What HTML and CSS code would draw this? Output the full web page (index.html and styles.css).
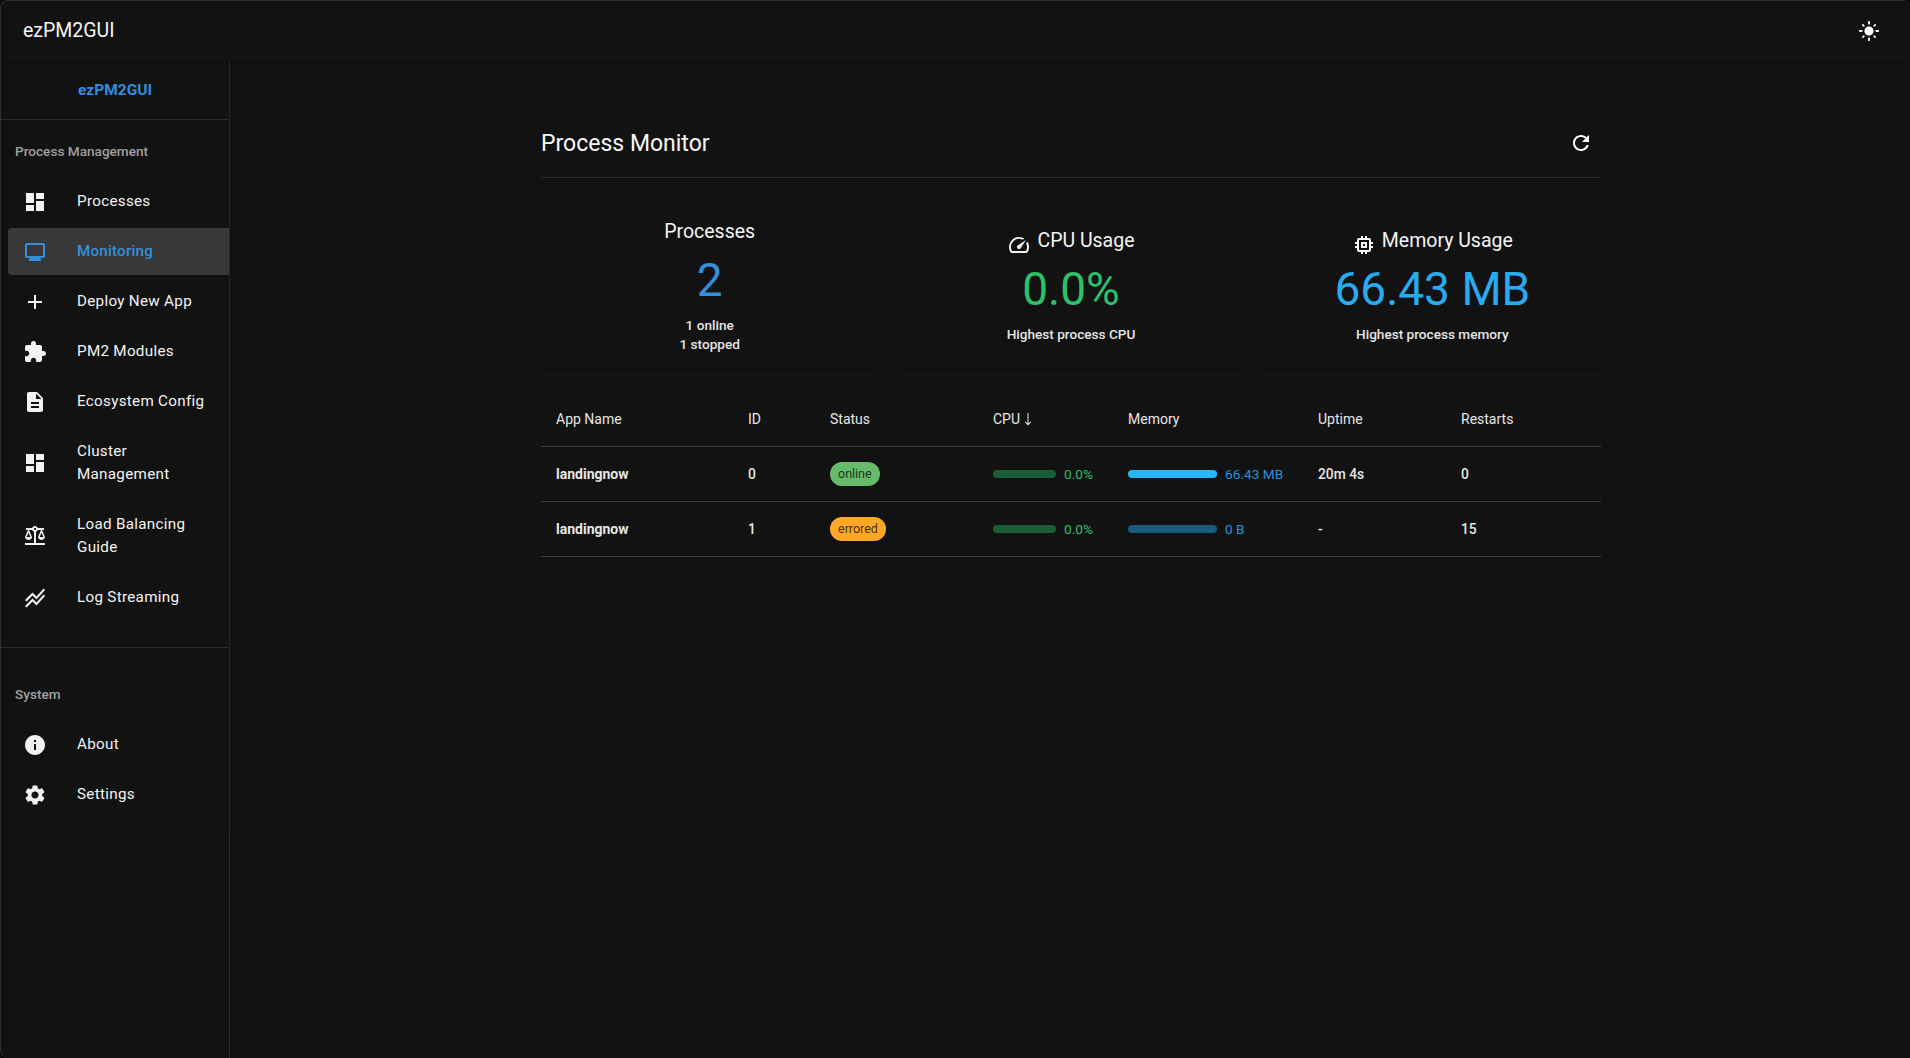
FILE: index.html
```html
<!DOCTYPE html>
<html lang="en">
<head>
<meta charset="utf-8">
<title>ezPM2GUI</title>
<link rel="stylesheet" href="styles.css">
</head>
<body>
<div class="window">
  <header class="appbar">
    <div class="brand">ezPM2GUI</div>
    <button class="theme-btn" aria-label="Toggle theme">
      <svg class="icon" viewBox="0 0 24 24"><path d="M12 7c-2.76 0-5 2.24-5 5s2.24 5 5 5 5-2.24 5-5-2.24-5-5-5zM2 13h2c.55 0 1-.45 1-1s-.45-1-1-1H2c-.55 0-1 .45-1 1s.45 1 1 1zm18 0h2c.55 0 1-.45 1-1s-.45-1-1-1h-2c-.55 0-1 .45-1 1s.45 1 1 1zM11 2v2c0 .55.45 1 1 1s1-.45 1-1V2c0-.55-.45-1-1-1s-1 .45-1 1zm0 18v2c0 .55.45 1 1 1s1-.45 1-1v-2c0-.55-.45-1-1-1s-1 .45-1 1zM5.99 4.58c-.39-.39-1.03-.39-1.41 0-.39.39-.39 1.03 0 1.41l1.06 1.06c.39.39 1.03.39 1.41 0s.39-1.03 0-1.41L5.99 4.58zm12.37 12.37c-.39-.39-1.03-.39-1.41 0-.39.39-.39 1.03 0 1.41l1.06 1.06c.39.39 1.03.39 1.41 0 .39-.39.39-1.03 0-1.41l-1.06-1.06zm1.06-10.96c.39-.39.39-1.03 0-1.41-.39-.39-1.03-.39-1.41 0l-1.06 1.06c-.39.39-.39 1.03 0 1.41s1.03.39 1.41 0l1.06-1.06zM7.05 18.36c.39-.39.39-1.03 0-1.41-.39-.39-1.03-.39-1.41 0l-1.06 1.06c-.39.39-.39 1.03 0 1.41s1.03.39 1.41 0l1.06-1.06z"/></svg>
    </button>
  </header>
  <div class="body-row">
    <aside class="sidebar">
      <div class="side-inner">
        <div class="side-brand">ezPM2GUI</div>
        <section class="side-group first">
          <div class="side-label">Process Management</div>
          <a class="nav-item"><svg class="icon nav-icon" viewBox="0 0 24 24"><path d="M3 13h8V3H3v10zm0 8h8v-6H3v6zm10 0h8V11h-8v10zm0-18v6h8V3h-8z"/></svg><span>Processes</span></a>
          <a class="nav-item active"><svg class="icon nav-icon" viewBox="0 0 24 24"><path d="M20 3H4c-1.1 0-2 .9-2 2v11c0 1.1.9 2 2 2h3l-1 1v2h12v-2l-1-1h3c1.1 0 2-.9 2-2V5c0-1.1-.9-2-2-2zm0 13H4V5h16v11z"/></svg><span>Monitoring</span></a>
          <a class="nav-item"><svg class="icon nav-icon" viewBox="0 0 24 24"><path d="M19 13h-6v6h-2v-6H5v-2h6V5h2v6h6v2z"/></svg><span>Deploy New App</span></a>
          <a class="nav-item"><svg class="icon nav-icon" viewBox="0 0 24 24"><path d="M20.5 11H19V7c0-1.1-.9-2-2-2h-4V3.5C13 2.12 11.88 1 10.5 1S8 2.12 8 3.5V5H4c-1.1 0-1.99.9-1.99 2v3.8H3.5c1.49 0 2.7 1.21 2.7 2.7s-1.21 2.7-2.7 2.7H2V20c0 1.1.9 2 2 2h3.8v-1.5c0-1.49 1.21-2.7 2.7-2.7 1.49 0 2.7 1.21 2.7 2.7V22H17c1.1 0 2-.9 2-2v-4h1.5c1.38 0 2.5-1.12 2.5-2.5S21.88 11 20.5 11z"/></svg><span>PM2 Modules</span></a>
          <a class="nav-item"><svg class="icon nav-icon" viewBox="0 0 24 24"><path d="M14 2H6c-1.1 0-1.99.9-1.99 2L4 20c0 1.1.89 2 1.99 2H18c1.1 0 2-.9 2-2V8l-6-6zm2 16H8v-2h8v2zm0-4H8v-2h8v2zm-3-5V3.5L18.5 9H13z"/></svg><span>Ecosystem Config</span></a>
          <a class="nav-item"><svg class="icon nav-icon" viewBox="0 0 24 24"><path d="M3 13h8V3H3v10zm0 8h8v-6H3v6zm10 0h8V11h-8v10zm0-18v6h8V3h-8z"/></svg><span>Cluster Management</span></a>
          <a class="nav-item"><svg class="icon nav-icon" viewBox="0 0 24 24"><path d="M13 7.83c.85-.3 1.53-.98 1.83-1.83H18l-3 7c0 1.66 1.57 3 3.5 3s3.5-1.34 3.5-3l-3-7h2V4h-6.17c-.41-1.17-1.52-2-2.83-2s-2.42.83-2.83 2H3v2h2l-3 7c0 1.66 1.57 3 3.5 3S9 14.66 9 13L6 6h3.17c.3.85.98 1.53 1.83 1.83V19H2v2h20v-2h-9V7.83zM20.37 13h-3.74l1.87-4.36L20.37 13zm-13 0H3.63L5.5 8.64 7.37 13zM12 6c-.55 0-1-.45-1-1s.45-1 1-1 1 .45 1 1-.45 1-1 1z"/></svg><span>Load Balancing Guide</span></a>
          <a class="nav-item"><svg class="icon nav-icon" viewBox="0 0 24 24"><path d="M2 19.99l7.5-7.51 4 4 7.09-7.97L22 9.92l-8.5 9.56-4-4-6 6.01-1.5-1.5zm1.5-4.5l6-6.01 4 4L22 3.92l-1.41-1.41-7.09 7.97-4-4L2 13.99l1.5 1.5z"/></svg><span>Log Streaming</span></a>
        </section>
        <section class="side-group second">
          <div class="side-label">System</div>
          <a class="nav-item"><svg class="icon nav-icon" viewBox="0 0 24 24"><path d="M12 2C6.48 2 2 6.48 2 12s4.48 10 10 10 10-4.48 10-10S17.52 2 12 2zm1 15h-2v-6h2v6zm0-8h-2V7h2v2z"/></svg><span>About</span></a>
          <a class="nav-item"><svg class="icon nav-icon" viewBox="0 0 24 24"><path d="M19.14 12.94c.04-.3.06-.61.06-.94 0-.32-.02-.64-.07-.94l2.03-1.58c.18-.14.23-.41.12-.61l-1.92-3.32c-.12-.22-.37-.29-.59-.22l-2.39.96c-.5-.38-1.03-.7-1.62-.94l-.36-2.54c-.04-.24-.24-.41-.48-.41h-3.84c-.24 0-.43.17-.47.41l-.36 2.54c-.59.24-1.13.57-1.62.94l-2.39-.96c-.22-.08-.47 0-.59.22L2.74 8.87c-.12.21-.08.47.12.61l2.03 1.58c-.05.3-.09.63-.09.94s.02.64.07.94l-2.03 1.58c-.18.14-.23.41-.12.61l1.92 3.32c.12.22.37.29.59.22l2.39-.96c.5.38 1.03.7 1.62.94l.36 2.54c.05.24.24.41.48.41h3.84c.24 0 .44-.17.47-.41l.36-2.54c.59-.24 1.13-.56 1.62-.94l2.39.96c.22.08.47 0 .59-.22l1.92-3.32c.12-.22.07-.47-.12-.61l-2.01-1.58zM12 15.6c-1.98 0-3.6-1.62-3.6-3.6s1.62-3.6 3.6-3.6 3.6 1.62 3.6 3.6-1.62 3.6-3.6 3.6z"/></svg><span>Settings</span></a>
        </section>
      </div>
    </aside>
    <main class="main">
      <div class="panel">
        <div class="panel-head">
          <h1 class="panel-title">Process Monitor</h1>
          <button class="refresh" aria-label="Refresh">
            <svg class="icon" viewBox="0 0 24 24"><path d="M17.65 6.35C16.2 4.9 14.21 4 12 4c-4.42 0-7.99 3.58-7.99 8s3.57 8 7.99 8c3.73 0 6.84-2.55 7.73-6h-2.08c-.82 2.33-3.04 4-5.65 4-3.31 0-6-2.69-6-6s2.69-6 6-6c1.66 0 3.14.69 4.22 1.78L13 11h7V4l-2.35 2.35z"/></svg>
          </button>
        </div>
        <div class="cards">
          <div class="card">
            <div class="card-title">Processes</div>
            <div class="card-value blue">2</div>
            <div class="card-note">1 online</div>
            <div class="card-note">1 stopped</div>
          </div>
          <div class="card">
            <div class="card-title"><svg class="icon title-icon" viewBox="0 0 24 24"><path d="M20.38 8.57l-1.23 1.85a8 8 0 0 1-.22 7.58H5.07A8 8 0 0 1 15.58 6.85l1.85-1.23A10 10 0 0 0 3.35 19a2 2 0 0 0 1.72 1h13.85a2 2 0 0 0 1.74-1 10 10 0 0 0-.27-10.44zm-9.79 6.84a2 2 0 0 0 2.83 0l5.66-8.49-8.49 5.66a2 2 0 0 0 0 2.83z"/></svg>CPU Usage</div>
            <div class="card-value green">0.0%</div>
            <div class="card-note">Highest process CPU</div>
          </div>
          <div class="card">
            <div class="card-title"><svg class="icon title-icon" viewBox="0 0 24 24"><path d="M15 9H9v6h6V9zm-2 4h-2v-2h2v2zm8-2V9h-2V7c0-1.1-.9-2-2-2h-2V3h-2v2h-2V3H9v2H7c-1.1 0-2 .9-2 2v2H3v2h2v2H3v2h2v2c0 1.1.9 2 2 2h2v2h2v-2h2v2h2v-2h2c1.1 0 2-.9 2-2v-2h2v-2h-2v-2h2zm-4 6H7V7h10v10z"/></svg>Memory Usage</div>
            <div class="card-value sky">66.43 MB</div>
            <div class="card-note">Highest process memory</div>
          </div>
        </div>
        <table class="proc-table">
          <thead>
            <tr>
              <th>App Name</th><th>ID</th><th>Status</th>
              <th>CPU<svg class="sort-icon" viewBox="0 0 8 14"><path d="M3.5 0h1v10.2L6.6 8.4l.6.7L4 12.6.8 9.1l.6-.7 2.1 1.8z"/></svg></th>
              <th>Memory</th><th>Uptime</th><th>Restarts</th>
            </tr>
          </thead>
          <tbody>
            <tr>
              <td class="name">landingnow</td><td>0</td>
              <td><span class="chip chip-online">online</span></td>
              <td><div class="meter"><span class="bar bar-cpu"></span><span class="green">0.0%</span></div></td>
              <td><div class="meter"><span class="bar bar-mem"></span><span class="mem-text">66.43 MB</span></div></td>
              <td>20m 4s</td><td>0</td>
            </tr>
            <tr>
              <td class="name">landingnow</td><td>1</td>
              <td><span class="chip chip-errored">errored</span></td>
              <td><div class="meter"><span class="bar bar-cpu"></span><span class="green">0.0%</span></div></td>
              <td><div class="meter"><span class="bar bar-mem-empty"></span><span class="mem-text">0 B</span></div></td>
              <td>-</td><td>15</td>
            </tr>
          </tbody>
        </table>
      </div>
    </main>
  </div>
</div>
</body>
</html>
```

FILE: styles.css
```css
* { box-sizing: border-box; }
html, body { margin: 0; height: 100%; background: #0a0a0a; }
body { font-family: Roboto, "Liberation Sans", sans-serif; color: #fff; overflow: hidden; }
.window {
  height: 1058px;
  background: #121212;
  border: 1px solid #2f2f2f;
  border-width: 1px 0 0 1px;
  border-radius: 8px 8px 0 8px;
  display: flex;
  flex-direction: column;
  overflow: hidden;
}
.icon { width: 24px; height: 24px; fill: currentColor; display: block; flex: none; }

.appbar {
  height: 60px;
  flex: none;
  display: flex;
  align-items: center;
  justify-content: space-between;
  padding: 0 30px 0 22px;
  background: #121212;
  box-shadow: 0 1px 3px rgba(0,0,0,.3);
  position: relative;
}
.brand { font-size: 19.5px; font-weight: 400; margin-top: -2px; color: #f4f4f4; }
.theme-btn { background: none; border: 0; padding: 0; color: #fff; }
.theme-btn .icon { width: 22px; height: 22px; }

.body-row { flex: 1; display: flex; min-height: 0; }
.sidebar { width: 229px; flex: none; border-right: 1px solid #2b2b2b; }
.side-inner { box-shadow: 0 2px 4px rgba(0,0,0,.18); padding-bottom: 9px; }
.side-brand {
  height: 59px;
  display: flex;
  align-items: center;
  justify-content: center;
  font-size: 15.5px;
  font-weight: 700;
  color: #338fdc;
  border-bottom: 1px solid #2b2b2b;
}
.side-group { padding-right: 0; padding-left: 7px; }
.side-group.first { padding-top: 21px; padding-bottom: 23px; border-bottom: 1px solid #2b2b2b; }
.side-group.second { padding-top: 36px; }
.side-label {
  font-size: 13.6px;
  font-weight: 500;
  line-height: 20px;
  color: #a0a0a0;
  padding-left: 7px;
  margin-bottom: 17px;
}
.nav-item {
  display: flex;
  align-items: center;
  padding: 12px 14px 12px 15px;
  margin-bottom: 3px;
  border-radius: 4px 0 0 4px;
  font-size: 15.2px;
  letter-spacing: .3px;
  font-weight: 400;
  line-height: 23px;
  color: #f2f2f2;
}
.nav-item span { flex: 1; }
.nav-icon { margin: -1px 30px -1px 0; }
.nav-item.active { background: #383838; color: #338fdc; font-weight: 500; letter-spacing: .2px; }

.main { flex: 1; min-width: 0; padding-left: 287px; }
.panel {
  width: 1108px;
  margin-top: 24px;
  padding: 0 24px 32px;
  box-shadow: 0 2px 2px rgba(0,0,0,.14);
}
.panel-head {
  height: 93px;
  padding-top: 43px;
  display: flex;
  align-items: flex-start;
  justify-content: space-between;
  border-bottom: 1px solid #2e2e2e;
}
.panel-title { margin: 0; font-size: 23px; line-height: 32px; font-weight: 400; color: #f6f6f6; }
.refresh { background: none; border: 0; padding: 3px 8px 0 0; color: #fff; }
.cards {
  display: grid;
  grid-template-columns: repeat(3, 1fr);
  gap: 24px;
  margin-top: 27px;
}
.card {
  height: 163px;
  display: flex;
  flex-direction: column;
  align-items: center;
  justify-content: center;
  border-radius: 4px;
  box-shadow: 0 2px 2px -1px rgba(0,0,0,.35);
  padding-bottom: 4px;
}
.card-title { font-size: 19.5px; line-height: 32px; display: flex; align-items: center; color: #f4f4f4; }
.title-icon { margin: 8px 6px 0 0; }
.card-value { font-size: 46px; line-height: 56px; font-weight: 400; margin: 4px 0 8px; }
.card-note { font-size: 13.6px; line-height: 19px; font-weight: 500; color: #e6e6e6; }
.blue { color: #338fdc; }
.green { color: #2bc06a; }
.sky { color: #29abf2; }

.proc-table {
  width: 100%;
  margin-top: 14px;
  border-collapse: collapse;
  table-layout: fixed;
  font-size: 13.8px;
}
.proc-table th {
  height: 64px;
  text-align: left;
  font-size: 14px;
  font-weight: 400;
  color: #e6e6e6;
  padding: 10px 0 0 15px;
  border-bottom: 1px solid #3a3a3a;
}
.proc-table td {
  height: 55px;
  padding: 0 0 0 15px;
  font-weight: 500;
  color: #e6e6e6;
  border-bottom: 1px solid #3a3a3a;
}
.proc-table td.name { font-size: 14px; font-weight: 700; }
.proc-table th:nth-child(1) { width: 192px; }
.proc-table th:nth-child(2) { width: 82px; }
.proc-table th:nth-child(3) { width: 163px; }
.proc-table th:nth-child(4) { width: 135px; }
.proc-table th:nth-child(5) { width: 190px; }
.proc-table th:nth-child(6) { width: 143px; }
.sort-icon { width: 8px; height: 14px; fill: #e6e6e6; vertical-align: -3px; margin-left: 4px; }
.chip {
  display: inline-flex;
  align-items: center;
  height: 24px;
  padding: 0 8px;
  border-radius: 12px;
  font-size: 12.5px;
  font-weight: 400;
  color: rgba(0,0,0,.75);
}
.chip-online { background: #66bb6a; }
.chip-errored { background: #ffa726; }
.meter { display: flex; align-items: center; gap: 8px; font-size: 13.7px; font-weight: 400; }
.bar { height: 8px; border-radius: 4px; flex: none; }
.bar-cpu { width: 63px; background: #1a5e38; }
.bar-mem { width: 89px; background: #29b6f6; }
.bar-mem-empty { height: 8px; border-radius: 4px; flex: none; width: 89px; background: #175a7d; }
.mem-text { color: #2a90dc; }
```
